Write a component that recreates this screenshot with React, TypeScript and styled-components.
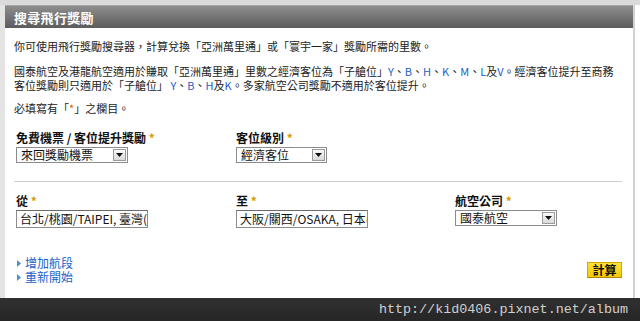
import React from 'react';
import styled, { createGlobalStyle } from 'styled-components';

const GlobalStyle = createGlobalStyle`
  html, body {
    margin: 0;
    padding: 0;
    background: #ffffff;
  }
  body {
    font-family: "Noto Sans CJK TC", "Liberation Sans", sans-serif;
    color: #222;
  }
`;

const Star = () => <StyledStar>*</StyledStar>;

const SelectBox = ({ value, width }: { value: string; width: number }) => (
  <StyledSelect style={{ width }}>
    <StyledSelectText>{value}</StyledSelectText>
    <StyledArrow>
      <svg width="7" height="4" viewBox="0 0 7 4">
        <path d="M0 0 H7 L3.5 4 Z" fill="#111" />
      </svg>
    </StyledArrow>
  </StyledSelect>
);

const LinkItem = ({ children }: { children: React.ReactNode }) => (
  <StyledLinkRow>
    <svg width="4" height="7" viewBox="0 0 4 7">
      <path d="M0 0 L4 3.5 L0 7 Z" fill="#4a8fd8" />
    </svg>
    <StyledLink>{children}</StyledLink>
  </StyledLinkRow>
);

export default function App() {
  return (
    <>
      <GlobalStyle />
      <StyledPage>
        <StyledFrame>
          <StyledPanel>
            <StyledHeader>搜尋飛行獎勵</StyledHeader>
            <StyledBody>
              <StyledText>
                你可使用飛行獎勵搜尋器，計算兌換「亞洲萬里通」或「寰宇一家」獎勵所需的里數。
              </StyledText>
              <StyledText $gap={11}>
                國泰航空及港龍航空適用於賺取「亞洲萬里通」里數之經濟客位為「子艙位」
                <Code>Y</Code>、<Code>B</Code>、<Code>H</Code>、<Code>K</Code>、<Code>M</Code>、
                <Code>L</Code>及<Code>V</Code>。經濟客位提升至商務
                <br />
                客位獎勵則只適用於「子艙位」 <Code>Y</Code>、<Code>B</Code>、<Code>H</Code>及
                <Code>K</Code>。多家航空公司獎勵不適用於客位提升。
              </StyledText>
              <StyledText $gap={9}>
                必填寫有「<StyledRed>*</StyledRed>」之欄目。
              </StyledText>

              <StyledFieldGrid $top={15}>
                <StyledField>
                  <StyledLabel>
                    免費機票 / 客位提升獎勵 <Star />
                  </StyledLabel>
                  <SelectBox value="來回獎勵機票" width={112} />
                </StyledField>
                <StyledField>
                  <StyledLabel>
                    客位級別 <Star />
                  </StyledLabel>
                  <SelectBox value="經濟客位" width={91} />
                </StyledField>
              </StyledFieldGrid>

              <StyledRule />

              <StyledFieldGrid $top={11}>
                <StyledField>
                  <StyledLabel>
                    從 <Star />
                  </StyledLabel>
                  <StyledInput style={{ width: 132 }}>台北/桃園/TAIPEI, 臺灣(TPE)</StyledInput>
                </StyledField>
                <StyledField>
                  <StyledLabel>
                    至 <Star />
                  </StyledLabel>
                  <StyledInput style={{ width: 132 }}>大阪/關西/OSAKA, 日本(KIX)</StyledInput>
                </StyledField>
                <StyledField>
                  <StyledLabel>
                    航空公司 <Star />
                  </StyledLabel>
                  <SelectBox value="國泰航空" width={102} />
                </StyledField>
              </StyledFieldGrid>

              <StyledActions>
                <StyledLinks>
                  <LinkItem>增加航段</LinkItem>
                  <LinkItem>重新開始</LinkItem>
                </StyledLinks>
                <StyledButton>計算</StyledButton>
              </StyledActions>
            </StyledBody>
          </StyledPanel>
        </StyledFrame>
        <StyledFooter>
          <StyledWatermark>http://kid0406.pixnet.net/album</StyledWatermark>
        </StyledFooter>
      </StyledPage>
    </>
  );
}

const StyledPage = styled.div`
  width: 640px;
  height: 321px;
  display: flex;
  flex-direction: column;
  overflow: hidden;
  background: #fff;
`;

const StyledFrame = styled.div`
  flex: 1 1 auto;
  display: flex;
  border-top: 5px solid #dadada;
  background: #fff;
`;

const StyledPanel = styled.div`
  width: 628px;
  display: flex;
  flex-direction: column;
  border-left: 5px solid #e4e4e4;
  border-right: 2px solid #d2d2d2;
  background: #fff;
`;

const StyledHeader = styled.div`
  height: 23px;
  box-sizing: border-box;
  padding-left: 9px;
  display: flex;
  align-items: center;
  background: linear-gradient(#8e8e8e, #747474 50%, #5c5c5c);
  border-top: 1px solid #a6a6a6;
  color: #fff;
  font-size: 13px;
  font-weight: bold;
  letter-spacing: 0.3px;
`;

const StyledBody = styled.div`
  flex: 1 1 auto;
  display: flex;
  flex-direction: column;
  padding: 11px 11px 0 9px;
`;

const StyledText = styled.p<{ $gap?: number }>`
  margin: ${({ $gap }) => $gap ?? 0}px 0 0;
  font-size: 11px;
  line-height: 14px;
  white-space: nowrap;
  color: #222;
`;

const Code = styled.span`
  color: #1c5cc8;
`;

const StyledRed = styled.span`
  color: #e05a00;
`;

const StyledStar = styled.span`
  color: #d89a00;
  font-weight: bold;
`;

const StyledFieldGrid = styled.div<{ $top: number }>`
  display: grid;
  grid-template-columns: 220px 219px auto;
  margin-top: ${({ $top }) => $top}px;
  padding-left: 2px;
`;

const StyledField = styled.div`
  display: flex;
  flex-direction: column;
  align-items: flex-start;
  gap: 2px;
`;

const StyledLabel = styled.div`
  font-size: 12px;
  line-height: 15px;
  font-weight: bold;
  color: #111;
  white-space: nowrap;
`;

const StyledSelect = styled.div`
  height: 16px;
  box-sizing: border-box;
  display: flex;
  align-items: center;
  border: 1px solid #8c8c8c;
  background: #fff;
  padding: 0 1px 0 4px;
`;

const StyledSelectText = styled.span`
  flex: 1 1 auto;
  font-size: 12px;
  line-height: 14px;
  color: #111;
  white-space: nowrap;
`;

const StyledArrow = styled.span`
  width: 13px;
  height: 12px;
  box-sizing: border-box;
  display: flex;
  align-items: center;
  justify-content: center;
  border: 1px solid #9a9a9a;
  background: linear-gradient(#fafafa, #d8d8d8);
`;

const StyledInput = styled.div`
  height: 18px;
  box-sizing: border-box;
  border: 1px solid #8c8c8c;
  border-top-color: #6a6a6a;
  padding: 0 3px;
  font-size: 12px;
  line-height: 16px;
  color: #111;
  white-space: nowrap;
  overflow: hidden;
`;

const StyledRule = styled.div`
  height: 1px;
  margin: 18px 0 0 0;
  background: #cfcfcf;
`;

const StyledActions = styled.div`
  margin-top: 28px;
  display: flex;
  justify-content: space-between;
  align-items: flex-start;
  padding-left: 3px;
`;

const StyledLinks = styled.div`
  display: flex;
  flex-direction: column;
`;

const StyledLinkRow = styled.div`
  display: flex;
  align-items: center;
  gap: 4px;
  height: 14px;
`;

const StyledLink = styled.a`
  font-size: 12px;
  line-height: 14px;
  color: #1a62c8;
  text-decoration: none;
  cursor: pointer;
`;

const StyledButton = styled.button`
  margin-top: 6px;
  width: 35px;
  height: 16px;
  padding: 0;
  box-sizing: border-box;
  border: 1px solid #d4a800;
  border-bottom-color: #b08800;
  background: linear-gradient(#ffe23a, #f5c800);
  font-family: "Noto Sans CJK TC", sans-serif;
  font-size: 12px;
  line-height: 14px;
  font-weight: bold;
  color: #111;
`;

const StyledFooter = styled.div`
  height: 23px;
  flex: 0 0 23px;
  display: flex;
  align-items: center;
  justify-content: flex-end;
  padding-right: 12px;
  background: linear-gradient(#303030, #2c2c2c 40%, #262626);
`;

const StyledWatermark = styled.span`
  font-family: "Liberation Mono", "DejaVu Sans Mono", monospace;
  font-size: 13.4px;
  color: #d0d0d0;
  letter-spacing: 0;
`;
